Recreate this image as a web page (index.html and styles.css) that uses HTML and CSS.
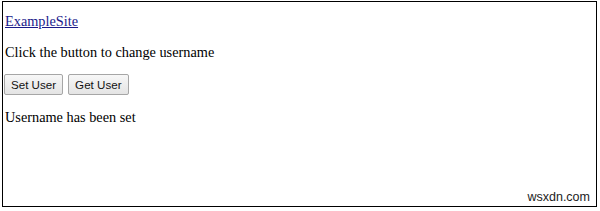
FILE: index.html
```html
<!DOCTYPE html>
<html>
<head>
<meta charset="utf-8">
<link rel="stylesheet" href="styles.css">
</head>
<body>
<div class="frame">
  <p class="first"><a href="#" class="site">ExampleSite</a></p>
  <p class="prompt">Click the button to change username</p>
  <div class="buttons">
    <button class="btn">Set User</button>
    <button class="btn">Get User</button>
  </div>
  <p>Username has been set</p>
  <div class="mark">wsxdn.com</div>
</div>
</body>
</html>
```
FILE: styles.css
```css
html, body {
  margin: 0;
  padding: 0;
  background: #fff;
}
body {
  width: 600px;
  height: 211px;
  overflow: hidden;
}
.frame {
  position: relative;
  box-sizing: border-box;
  margin: 1px 0 0 2px;
  width: 595px;
  height: 206px;
  border: 1px solid #000;
  padding: 11px 2px 0 2px;
  font-family: "Liberation Serif", "Times New Roman", serif;
  font-size: 14.3px;
  color: #000;
}
p {
  margin: 14px 0;
}
.first {
  margin-top: 0;
}
.prompt {
  margin-bottom: 13px;
}
.site {
  color: #1a1a8a;
}
.buttons {
  display: flex;
  gap: 5px;
  margin-left: -1px;
}
.btn {
  box-sizing: border-box;
  height: 21px;
  font-family: "Liberation Sans", Arial, sans-serif;
  font-size: 11.6px;
  padding: 0 6px;
  background: linear-gradient(#f7f7f7, #e4e4e4);
  border: 1px solid #a6a6a6;
  border-radius: 2px;
  color: #111;
}
.mark {
  position: absolute;
  right: 6px;
  bottom: 2px;
  font-family: "Liberation Sans", Arial, sans-serif;
  font-size: 12.5px;
  color: #222;
}
```
